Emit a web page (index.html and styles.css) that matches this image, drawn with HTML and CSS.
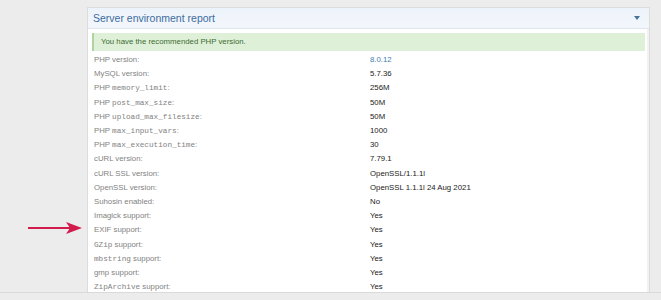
FILE: index.html
```html
<!DOCTYPE html>
<html lang="en">
<head>
    <meta charset="UTF-8">
    <meta name="viewport" content="width=device-width, initial-scale=1.0">
    <title>Server environment report</title>
    <link rel="stylesheet" href="styles.css">
</head>
<body>

    <div class="page">
        <!-- Annotation arrow pointing at the EXIF row -->
        <svg class="arrow" width="56" height="14" viewBox="0 0 56 14">
            <line x1="0" y1="7" x2="42" y2="7" stroke="#d31a4c" stroke-width="2"/>
            <polygon points="38,1 54,7 38,13 42,7" fill="#d31a4c"/>
        </svg>

        <section class="panel">
            <header class="panel-header">
                <h2>Server environment report</h2>
                <span class="caret"></span>
            </header>

            <div class="panel-body">
                <div class="notice">You have the recommended PHP version.</div>

                <dl class="report">
                    <dt>PHP version:</dt><dd class="accent">8.0.12</dd>
                    <dt>MySQL version:</dt><dd>5.7.36</dd>
                    <dt>PHP <code>memory_limit</code>:</dt><dd>256M</dd>
                    <dt>PHP <code>post_max_size</code>:</dt><dd>50M</dd>
                    <dt>PHP <code>upload_max_filesize</code>:</dt><dd>50M</dd>
                    <dt>PHP <code>max_input_vars</code>:</dt><dd>1000</dd>
                    <dt>PHP <code>max_execution_time</code>:</dt><dd>30</dd>
                    <dt>cURL version:</dt><dd>7.79.1</dd>
                    <dt>cURL SSL version:</dt><dd>OpenSSL/1.1.1l</dd>
                    <dt>OpenSSL version:</dt><dd>OpenSSL 1.1.1l 24 Aug 2021</dd>
                    <dt>Suhosin enabled:</dt><dd>No</dd>
                    <dt>Imagick support:</dt><dd>Yes</dd>
                    <dt>EXIF support:</dt><dd>Yes</dd>
                    <dt><code>GZip</code> support:</dt><dd>Yes</dd>
                    <dt><code>mbstring</code> support:</dt><dd>Yes</dd>
                    <dt>gmp support:</dt><dd>Yes</dd>
                    <dt><code>ZipArchive</code> support:</dt><dd>Yes</dd>
                </dl>
            </div>
        </section>
    </div>

</body>
</html>
```

FILE: styles.css
```css
/* Page frame */
body {
    margin: 0;
    background: #ececec;
    font-family: 'Liberation Sans', Arial, sans-serif;
}

.page {
    position: relative;
    height: 293px;
    padding: 7px 11px 0 87px;
    box-sizing: border-box;
    border-bottom: 1px solid #dadada;
}

/* Red annotation arrow */
.arrow {
    position: absolute;
    left: 28px;
    top: 221px;
}

/* Panel box */
.panel {
    height: 100%;
    background: #fff;
    border: 1px solid #dcdcdc;
    border-bottom: 0;
    box-sizing: border-box;
    box-shadow: inset -2px 0 0 #f2f2f2;
}

.panel-header {
    display: flex;
    align-items: center;
    justify-content: space-between;
    height: 20px;
    padding: 0 9px 0 5px;
    background: linear-gradient(180deg, #edf3fa 0%, #f3f7fc 100%);
    border-bottom: 1px solid #dde5ee;
}

.panel-header h2 {
    margin: 0;
    font-size: 10.5px;
    font-weight: normal;
    color: #3c6c9e;
}

.caret {
    width: 0;
    height: 0;
    border-left: 3.5px solid transparent;
    border-right: 3.5px solid transparent;
    border-top: 4px solid #47729c;
}

.panel-body {
    padding: 4px 4px 0 4px;
}

/* Success notice */
.notice {
    height: 18px;
    line-height: 18px;
    padding-left: 7px;
    background: #dff0d8;
    border-left: 2px solid #b0d3a2;
    color: #3c6b33;
    font-size: 7.8px;
}

/* Report rows */
.report {
    display: grid;
    grid-template-columns: 276px 1fr;
    margin: 2px 0 0 2px;
    font-size: 7.8px;
    line-height: 14.2px;
}

.report dt {
    color: #828282;
}

.report dd {
    margin: 0;
    color: #222;
}

.report dd.accent {
    color: #3f7bb3;
}

.report code {
    font-family: 'Liberation Mono', 'DejaVu Sans Mono', monospace;
    font-size: 7.7px;
}
```
